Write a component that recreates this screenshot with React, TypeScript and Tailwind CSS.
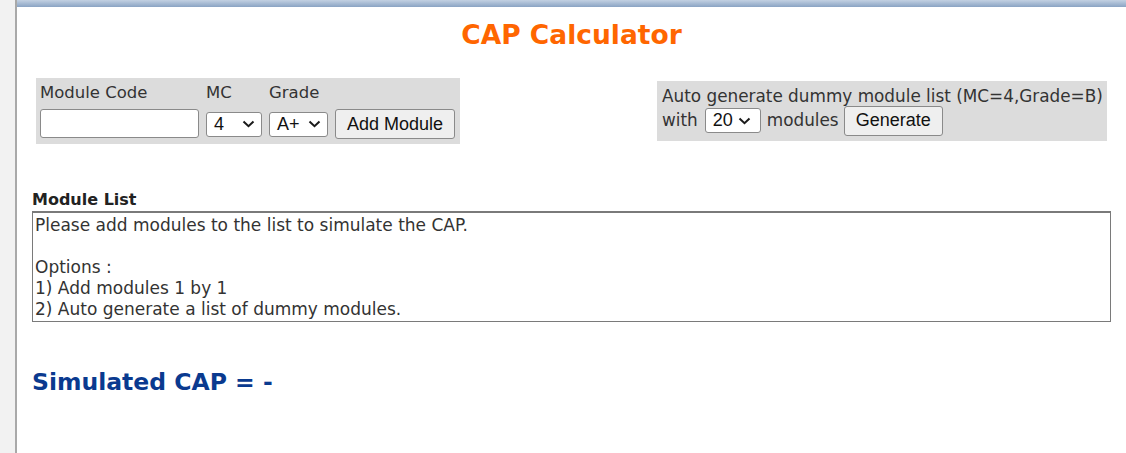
const verdana = "font-['DejaVu_Sans',Verdana,sans-serif]";
const arial = "font-['Liberation_Sans',Arial,sans-serif]";

function Chevron() {
	return (
		<svg aria-hidden="true" className="h-[8px] w-[13px]" viewBox="0 0 13 8" fill="none">
			<path d="M1.5 1.5 L6.5 6.2 L11.5 1.5" stroke="#1a1a1a" strokeWidth="2" />
		</svg>
	);
}

function FakeSelect({ value, width, pr }: { value: string; width: string; pr: string }) {
	return (
		<div
			className={`flex h-[25px] items-center justify-between rounded-[3px] border border-[#8a8a8a] bg-white pl-[7px] ${width} ${pr} ${arial} text-[18px] text-[#111]`}
		>
			<span>{value}</span>
			<Chevron />
		</div>
	);
}

function Btn({ children }: { children: string }) {
	return (
		<button
			type="button"
			className={`h-[30px] rounded-[3px] border border-[#8a8a8a] bg-[#efefef] px-[11px] ${arial} text-[18px] text-[#111]`}
		>
			{children}
		</button>
	);
}

export default function App() {
	return (
		<div className={`flex h-[453px] w-[1126px] overflow-hidden bg-white ${verdana}`}>
			<div className="w-[15px] bg-[#f2f2f2]" />
			<div className="w-[2px] bg-[#a9a9a9]" />
			<div className="flex-1">
				<div className="h-[7px] bg-gradient-to-b from-[#c3d1e2] to-[#8aa3c3]" />
				<div className="px-[15px]">
					<h1 className="mt-[13px] text-center text-[26.5px] leading-[30px] font-bold text-[#ff6600]">
						CAP Calculator
					</h1>

					<div className="mt-[28px] flex items-start justify-between px-[4px]">
						<div className="grid grid-cols-[159px_56px_59px_auto] gap-x-[7px] gap-y-[5px] bg-[#dcdcdc] pt-[4px] pr-[5px] pb-[5px] pl-[4px] text-[16.5px] text-[#333]">
							<span className="leading-[22px]">Module Code</span>
							<span className="leading-[22px]">MC</span>
							<span className="leading-[22px]">Grade</span>
							<span />
							<div className="h-[29px] rounded-[3px] border border-[#8a8a8a] bg-white" />
							<div className="self-center">
								<FakeSelect value="4" width="w-[56px]" pr="pr-[6px]" />
							</div>
							<div className="self-center">
								<FakeSelect value="A+" width="w-[59px]" pr="pr-[6px]" />
							</div>
							<Btn>Add Module</Btn>
						</div>

						<div className="mt-[3px] w-[450px] bg-[#dcdcdc] pt-[5px] pb-[6px] pl-[5px] text-[16.85px] text-[#333]">
							<div className="leading-[20px]">Auto generate dummy module list (MC=4,Grade=B)</div>
							<div className="flex h-[29px] items-center">
								<span>with</span>
								<div className="ml-[7px]">
									<FakeSelect value="20" width="w-[56px]" pr="pr-[9px]" />
								</div>
								<span className="ml-[6px]">modules</span>
								<div className="ml-[5px]">
									<Btn>Generate</Btn>
								</div>
							</div>
						</div>
					</div>

					<div className="mt-[46px] text-[16px] leading-[20px] font-bold text-[#222]">Module List</div>
					<div className="mt-[1px] border border-t-2 border-[#7a7a7a] pt-[2px] pb-[1px] pl-[2px] text-[17px] leading-[21px] text-[#333]">
						<div>Please add modules to the list to simulate the CAP.</div>
						<div>&nbsp;</div>
						<div>Options :</div>
						<div>1) Add modules 1 by 1</div>
						<div>2) Auto generate a list of dummy modules.</div>
					</div>

					<div className="mt-[45px] text-[23.5px] leading-[30px] font-bold text-[#0a3a8f]">Simulated CAP = -</div>
				</div>
			</div>
		</div>
	);
}
